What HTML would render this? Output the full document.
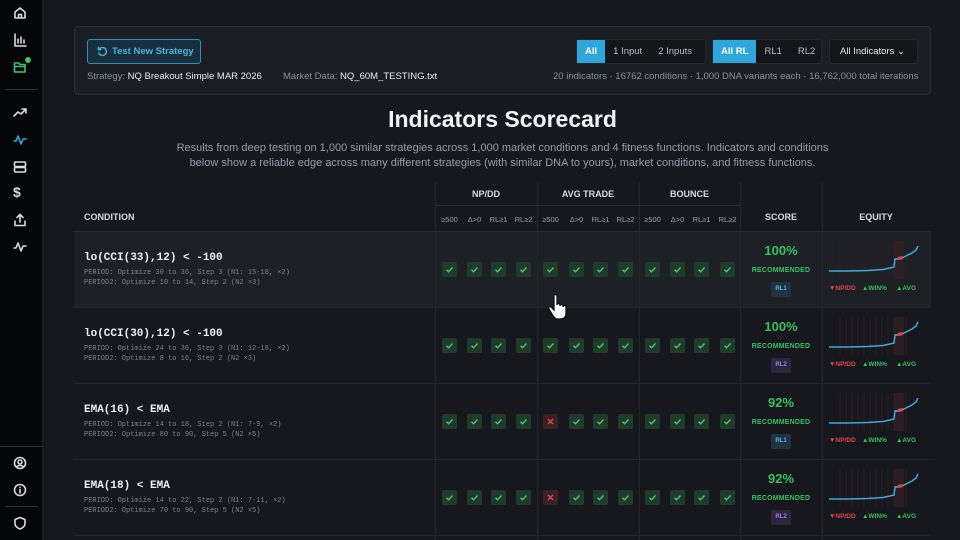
<!DOCTYPE html>
<html><head><meta charset="utf-8"><style>
*{margin:0;padding:0;box-sizing:border-box}
body{width:960px;height:540px;overflow:hidden;background:#16181d;font-family:"Liberation Sans",sans-serif;color:#e6e8eb;position:relative}
.a{position:absolute;white-space:nowrap}
.sb{left:0;top:0;width:43px;height:540px;background:#050607;border-right:1px solid #1d2025}
.sb svg{position:absolute;left:13px;width:14px;height:14px;fill:none;stroke:#d8dbe0;stroke-width:1.6;stroke-linecap:round;stroke-linejoin:round}
.panel{left:74px;top:26px;width:857px;height:69px;background:#1b1e23;border:1px solid #2a2e35;border-radius:4px}
.btn{left:87px;top:39px;width:114px;height:25px;border:1px solid #2f8fb8;border-radius:3px;background:#18303d;color:#4bb3e0;font-size:9.5px;font-weight:bold;line-height:23px;padding-left:24px}
.lbl{font-size:9.5px;color:#8a9099}
.lbl b{color:#e8eaed;font-weight:normal}
.seg{top:39px;height:25px;background:#14161a;border:1px solid #262a30;border-radius:3px;display:flex;font-size:9.5px;color:#b9bec6;white-space:nowrap}
.seg div{padding:0 8px;line-height:23px;white-space:nowrap}
.seg .on{background:#2ea8dc;color:#fff;font-weight:bold}
.th{font-size:9px;font-weight:bold;color:#d7dade;text-align:center}
.sub{font-size:7.5px;color:#9aa0a8;text-align:center;width:25px}
.vl{width:1px;background:#23272d}
.hl{height:1px;background:#262a30}
.cond{font-family:"Liberation Mono",monospace}
.cn{font-size:11px;font-weight:bold;color:#eef0f2}
.cd{font-size:7px;color:#7c828a;line-height:10px}
.ck{width:15px;height:15px;background:#1f3b2a;border-radius:2px}
.ck svg{width:15px;height:15px;stroke:#4cc774;stroke-width:1.4;fill:none}
.x{background:#3a2224}.x svg{stroke:#e0474c}
.pct{font-size:13px;font-weight:bold;color:#38c064;width:82px;text-align:center}
.rec{font-size:7px;font-weight:bold;color:#38c064;width:82px;text-align:center;letter-spacing:.2px}
.tag{width:20px;height:15px;font-size:6px;font-weight:bold;text-align:center;line-height:15px;border-radius:2px}
.r1{background:#1f3440;color:#5ab4dd}.r2{background:#2e2640;color:#a77ee2}
.leg{font-size:6.5px;font-weight:bold}
</style></head><body>
<div class="a sb">
<svg style="top:6px" viewBox="0 0 14 14"><path d="M2 6L7 2l5 4v6H2z M5.5 12V8.5h3V12"/></svg>
<svg style="top:33px" viewBox="0 0 14 14"><path d="M2 1v12h11 M5 10V6 M8 10V4 M11 10V7"/></svg>
<svg style="top:60px;stroke:#3fc26b" viewBox="0 0 14 14"><path d="M1.5 3h4l1.5 1.5h5V12h-10.5z M1.5 6.5h10.5"/></svg>
<div class="a" style="left:25px;top:57px;width:6px;height:6px;border-radius:50%;background:#3fc26b"></div>
<div class="a" style="left:5px;top:89px;width:33px;height:1px;background:#2a2e34"></div>
<svg style="top:106px" viewBox="0 0 14 14"><path d="M1 10l4-4 3 2 5-5 M9 3h4v4"/></svg>
<svg style="top:133px;stroke:#2ea8dc" viewBox="0 0 14 14"><path d="M1 8h2l2-5 3 8 2-5h3"/></svg>
<svg style="top:160px" viewBox="0 0 14 14"><rect x="1.5" y="2" width="11" height="4.5" rx="1"/><rect x="1.5" y="7.5" width="11" height="4.5" rx="1"/></svg>
<div class="a" style="left:13px;top:184px;font-size:14px;font-weight:bold;color:#d8dbe0">$</div>
<svg style="top:213px" viewBox="0 0 14 14"><path d="M2 8v4.5h10V8 M7 9V1.5 M4 4.5l3-3 3 3"/></svg>
<svg style="top:240px" viewBox="0 0 14 14"><path d="M1 8h2l2-5 3 8 2-5h3"/></svg>
<div class="a" style="left:0;top:446px;width:43px;height:1px;background:#2a2e34"></div>
<svg style="top:456px" viewBox="0 0 14 14"><circle cx="7" cy="7" r="5.5"/><circle cx="7" cy="6" r="2"/><path d="M3.5 11c1-2 6-2 7 0"/></svg>
<svg style="top:483px" viewBox="0 0 14 14"><circle cx="7" cy="7" r="5.5"/><path d="M7 6.5v3.5 M7 4.3v.2"/></svg>
<div class="a" style="left:5px;top:506px;width:33px;height:1px;background:#2a2e34"></div>
<svg style="top:516px" viewBox="0 0 14 14"><path d="M7 1.5l5 2v4c0 3-2.5 4.5-5 5.5-2.5-1-5-2.5-5-5.5v-4z"/></svg>
</div>

<div class="a panel"></div>
<div class="a btn"><svg class="a" style="left:9px;top:6px;width:11px;height:11px;fill:none;stroke:#4bb3e0;stroke-width:1.5" viewBox="0 0 12 12"><path d="M2.5 3.5A4.3 4.3 0 1 1 1.8 7 M1.5 1v3h3"/></svg>Test New Strategy</div>
<div class="a lbl" style="left:87px;top:71px">Strategy: <b>NQ Breakout Simple MAR 2026</b></div>
<div class="a lbl" style="left:283px;top:71px">Market Data: <b>NQ_60M_TESTING.txt</b></div>
<div class="a seg" style="left:576px;width:130px"><div class="on">All</div><div>1 Input</div><div>2 Inputs</div></div>
<div class="a seg" style="left:712px;width:110px"><div class="on">All RL</div><div>RL1</div><div>RL2</div></div>
<div class="a seg" style="left:829px;width:89px;padding-left:10px;line-height:23px;color:#e6e8eb;display:block">All Indicators &#8964;</div>
<div class="a lbl" style="left:553px;top:71px">20 indicators · 16762 conditions · 1,000 DNA variants each · 16,762,000 total iterations</div>

<div class="a" style="left:74px;top:106px;width:857px;text-align:center;font-size:23px;font-weight:bold;color:#f3f4f6">Indicators Scorecard</div>
<div class="a" style="left:74px;top:141px;width:857px;text-align:center;font-size:11px;line-height:15px;color:#979da6">Results from deep testing on 1,000 similar strategies across 1,000 market conditions and 4 fitness functions. Indicators and conditions<br>below show a reliable edge across many different strategies (with similar DNA to yours), market conditions, and fitness functions.</div>

<div class="a" style="left:74px;top:231px;width:857px;height:76px;background:#1d2025"></div>
<div class="a hl" style="left:435px;top:205px;width:305px"></div>
<div class="a hl" style="left:74px;top:231px;width:857px"></div>
<div class="a hl" style="left:74px;top:307px;width:857px;background:#22262c"></div>
<div class="a hl" style="left:74px;top:383px;width:857px;background:#22262c"></div>
<div class="a hl" style="left:74px;top:459px;width:857px;background:#22262c"></div>
<div class="a hl" style="left:74px;top:535px;width:857px;background:#22262c"></div>
<div class="a vl" style="left:435px;top:182px;height:358px"></div>
<div class="a vl" style="left:537px;top:182px;height:358px"></div>
<div class="a vl" style="left:639px;top:182px;height:358px"></div>
<div class="a vl" style="left:740px;top:182px;height:358px"></div>
<div class="a vl" style="left:822px;top:182px;height:358px"></div>

<div class="a th" style="left:435px;top:189px;width:102px">NP/DD</div>
<div class="a th" style="left:537px;top:189px;width:102px">AVG TRADE</div>
<div class="a th" style="left:639px;top:189px;width:101px">BOUNCE</div>
<div class="a th" style="left:84px;top:212px;text-align:left">CONDITION</div>
<div class="a th" style="left:740px;top:212px;width:82px">SCORE</div>
<div class="a th" style="left:822px;top:212px;width:108px">EQUITY</div>
<div id="subs"></div>
<div id="rows"></div>

<svg class="a" style="left:548px;top:293px" width="26" height="28" viewBox="0 0 26 28"><path d="M6 3c0-2 3-2 3 0v9c0-2 3-2 3 0v1c0-2 3-2 3 0v1c0-2 3-2 3 0v6c0 4-2 6-6 6h-2c-3 0-4-2-6-5l-3-5c-1-2 1-3 2-2l3 3z" fill="#fff" stroke="#111" stroke-width="1.3"/></svg>

<script>
var xs=[449,474,498,523,550,576,600,625,652,677,701,727];
var sl=["≥500","Δ>0","RL≥1","RL≥2"],h="";
xs.forEach(function(x,i){h+='<div class="a sub" style="left:'+(x-12)+'px;top:215px">'+sl[i%4]+'</div>';});
document.getElementById('subs').innerHTML=h;
var R=[["lo(CCI(33),12) < -100","PERIOD: Optimize 30 to 36, Step 3 (N1: 15-18, ×2)","PERIOD2: Optimize 10 to 14, Step 2 (N2 ×3)","100%",1,-1],
["lo(CCI(30),12) < -100","PERIOD: Optimize 24 to 36, Step 3 (N1: 12-18, ×2)","PERIOD2: Optimize 8 to 16, Step 2 (N2 ×3)","100%",2,-1],
["EMA(16) < EMA","PERIOD: Optimize 14 to 18, Step 2 (N1: 7-9, ×2)","PERIOD2: Optimize 80 to 90, Step 5 (N2 ×5)","92%",1,4],
["EMA(18) < EMA","PERIOD: Optimize 14 to 22, Step 2 (N1: 7-11, ×2)","PERIOD2: Optimize 70 to 90, Step 5 (N2 ×5)","92%",2,4]];
var ck='<svg viewBox="0 0 15 15"><path d="M4.5 7.8l2 2 4-4.3"/></svg>',xx='<svg viewBox="0 0 15 15"><path d="M5 5l5 5M10 5l-5 5"/></svg>';
h="";
R.forEach(function(r,k){var t=231+76*k;
h+='<div class="a cond cn" style="left:84px;top:'+(t+21)+'px">'+r[0]+'</div>';
h+='<div class="a cond cd" style="left:84px;top:'+(t+37)+'px">'+r[1]+'<br>'+r[2]+'</div>';
xs.forEach(function(x,i){var bad=i==r[5];h+='<div class="a ck'+(bad?' x':'')+'" style="left:'+(x-7)+'px;top:'+(t+31)+'px">'+(bad?xx:ck)+'</div>';});
h+='<div class="a pct" style="left:740px;top:'+(t+12)+'px">'+r[3]+'</div>';
h+='<div class="a rec" style="left:740px;top:'+(t+36)+'px">RECOMMENDED</div>';
h+='<div class="a tag '+(r[4]==1?'r1':'r2')+'" style="left:771px;top:'+(t+51)+'px">RL'+r[4]+'</div>';
var v='';for(var j=0;j<12;j++)v+='<line x1="'+(12+j*6)+'" y1="0" x2="'+(12+j*6)+'" y2="38" stroke="#3a1f22" stroke-width="0.8"/>';
h+='<svg class="a" style="left:828px;top:'+(t+10)+'px" width="92" height="42" viewBox="0 0 92 42">'+v+'<rect x="66" y="0" width="10" height="38" fill="#3a2224" opacity=".6"/><path d="M1 30L20 30 40 29.5 55 28.5 62 27 66 26 67 18 72 18 76 16 80 14 84 12 88 9 90 5" fill="none" stroke="#3fa9dc" stroke-width="1.5"/><path d="M70 17.5l5-1" stroke="#e0474c" stroke-width="3"/></svg>';
h+='<div class="a leg" style="left:829px;top:'+(t+54)+'px;color:#e0474c">▼NP/DD</div><div class="a leg" style="left:862px;top:'+(t+54)+'px;color:#38c064">▲WIN%</div><div class="a leg" style="left:896px;top:'+(t+54)+'px;color:#38c064">▲AVG</div>';
});
document.getElementById('rows').innerHTML=h;
</script>
</body></html>
